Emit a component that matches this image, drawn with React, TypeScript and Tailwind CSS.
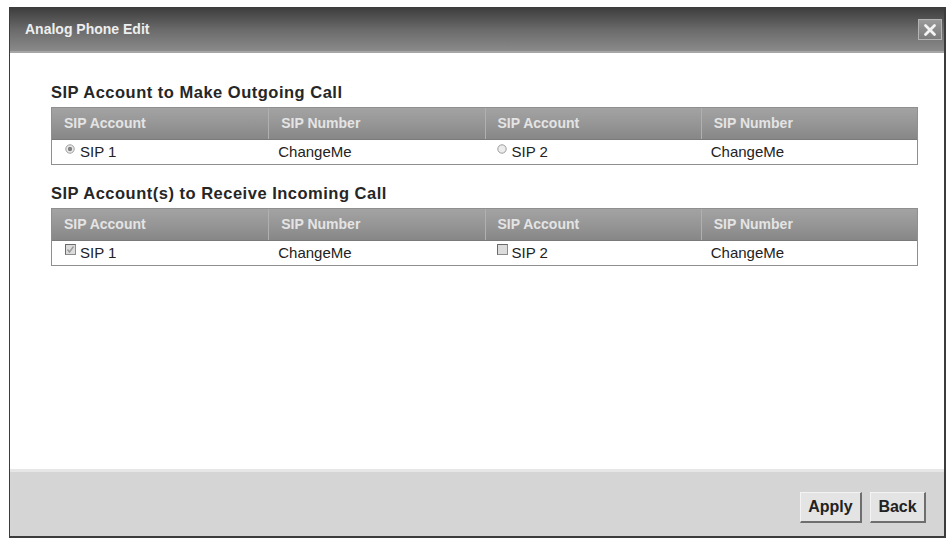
import React from "react";

const Radio = ({ checked }: { checked?: boolean }) => (
  <svg width="10" height="10" viewBox="0 0 10 10" className="mt-[-7px] mr-[5px] shrink-0">
    <circle cx="5" cy="5" r="4.2" fill="#ececec" stroke="#9c9c9c" strokeWidth="1" />
    {checked && <circle cx="5" cy="5" r="2.2" fill="#808080" />}
  </svg>
);

const Check = ({ checked }: { checked?: boolean }) => (
  <svg width="11" height="11" viewBox="0 0 11 11" className="mt-[-7px] mr-[4px] shrink-0">
    <rect x="0.5" y="0.5" width="10" height="10" fill="#dcdcdc" stroke="#8c8c8c" strokeWidth="1" />
    <path d="M0.5 10.5 V0.5 H10.5" fill="none" stroke="#6a6a6a" strokeWidth="1" />
    {checked && <path d="M2.5 5.5 L4.5 8 L8.5 2.5" fill="none" stroke="#9a9a9a" strokeWidth="1.4" />}
  </svg>
);

const headers = ["SIP Account", "SIP Number", "SIP Account", "SIP Number"];

const Table = ({ kind }: { kind: "radio" | "check" }) => (
  <div className="w-[867px] border border-[#8f8f8f]">
    <div className="grid grid-cols-4 h-[32px] bg-gradient-to-b from-[#a3a3a3] via-[#969696] to-[#878787] border-b border-[#7a7a7a]">
      {headers.map((h, i) => (
        <div
          key={i}
          className={`flex items-center pl-[12px] text-[14px] font-bold text-[#e4e4e4] ${i > 0 ? "border-l border-[#b0b0b0]" : ""}`}
        >
          {h}
        </div>
      ))}
    </div>
    <div className="grid grid-cols-4 h-[24px] bg-white text-[15px] text-[#222]">
      <div className="flex items-center pl-[13px]">
        {kind === "radio" ? <Radio checked /> : <Check checked />}
        <span>SIP 1</span>
      </div>
      <div className="flex items-center pl-[10px]">ChangeMe</div>
      <div className="flex items-center pl-[12px]">
        {kind === "radio" ? <Radio /> : <Check />}
        <span>SIP 2</span>
      </div>
      <div className="flex items-center pl-[10px]">ChangeMe</div>
    </div>
  </div>
);

export default function App() {
  return (
    <div className="w-[951px] h-[540px] bg-white pt-[7px] pl-[9px] pr-[5px] pb-[2px] font-['Liberation_Sans',Arial,sans-serif]">
      <div className="flex flex-col h-full border border-[#3c3c3c] border-r-2 border-b-2">
        <div className="h-[45px] shrink-0 flex items-center justify-between pl-[15px] pr-[2px] bg-gradient-to-b from-[#3e3e3e] via-[#6a6a6a] to-[#8a8a8a] border-b-2 border-[#a6a6a6]">
          <span className="text-[14px] font-bold text-[#eeeeee]">Analog Phone Edit</span>
          <div className="w-[24px] h-[21px] flex items-center justify-center bg-gradient-to-b from-[#9a9a9a] to-[#7c7c7c] border border-[#b4b4b4]">
            <svg width="14" height="14" viewBox="0 0 14 14">
              <path d="M2.5 2.5 L11.5 11.5 M11.5 2.5 L2.5 11.5" stroke="#f4f4f4" strokeWidth="2.8" strokeLinecap="round" />
            </svg>
          </div>
        </div>
        <div className="flex-1 bg-white pl-[41px] pt-[30px]">
          <div className="text-[16.5px] tracking-[0.5px] font-bold text-[#262626] leading-[18px] mb-[6px]">
            SIP Account to Make Outgoing Call
          </div>
          <Table kind="radio" />
          <div className="text-[16.5px] tracking-[0.5px] font-bold text-[#262626] leading-[18px] mt-[19px] mb-[6px]">
            SIP Account(s) to Receive Incoming Call
          </div>
          <Table kind="check" />
        </div>
        <div className="h-[67px] shrink-0 bg-[#d5d5d5] border-t-[3px] border-[#e6e6e6] flex items-center justify-end gap-[8px] pr-[18px] pt-[6px]">
          <button className="w-[62px] h-[31px] bg-[#e4e4e4] border border-[#f4f4f4] border-r-2 border-b-2 border-r-[#6e6e6e] border-b-[#6e6e6e] text-[16px] font-bold text-[#222]">
            Apply
          </button>
          <button className="w-[56px] h-[31px] bg-[#e4e4e4] border border-[#f4f4f4] border-r-2 border-b-2 border-r-[#6e6e6e] border-b-[#6e6e6e] text-[16px] font-bold text-[#222]">
            Back
          </button>
        </div>
      </div>
    </div>
  );
}
